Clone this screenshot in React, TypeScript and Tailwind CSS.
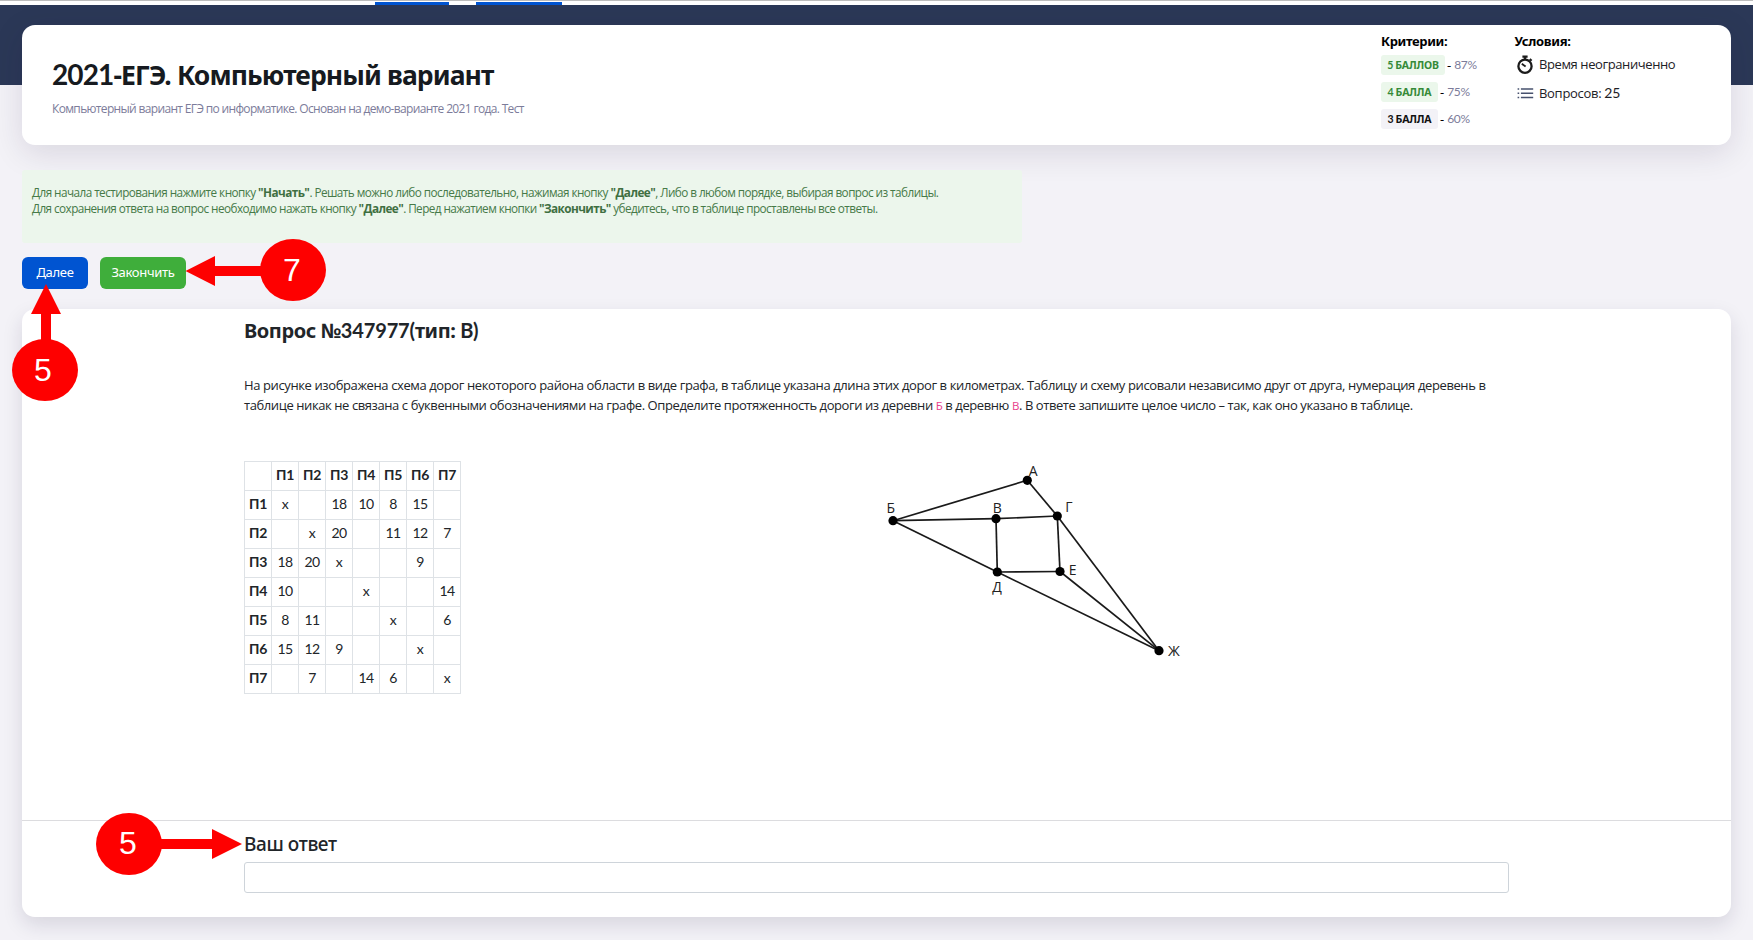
import type { ReactNode } from "react";

const sans = "font-['Open_Sans','Noto_Sans',sans-serif]";
const noto = "font-['Noto_Sans','Open_Sans',sans-serif]";
const lato = "font-['Lato','Open_Sans',sans-serif]";

function L({ children, className = "" }: { children: ReactNode; className?: string }) {
  return <span className={`${lato} leading-none ${className}`}>{children}</span>;
}

type Criterion = { mark: string; label: string; percent: string; box: string };

const criteria: Criterion[] = [
  { mark: "5", label: "БАЛЛОВ", percent: "87%", box: "w-16 bg-[#ebf7eb] text-[#358a38]" },
  { mark: "4", label: "БАЛЛА", percent: "75%", box: "w-[57px] bg-[#ebf7eb] text-[#358a38]" },
  { mark: "3", label: "БАЛЛА", percent: "60%", box: "w-[57px] bg-[#f3f2f7] text-[#111]" },
];

function Stopwatch() {
  return (
    <svg width="17" height="19" viewBox="0 0 17 19" fill="none" stroke="#1b1b1b">
      <circle cx="8" cy="11.2" r="6.6" strokeWidth="2.3" />
      <path d="M5.4 1.6h5.2M8 1.5v3" strokeWidth="2.4" />
      <path d="M12.8 4l1.8 1.8" strokeWidth="2" />
      <path d="M4.8 8.8L8.6 11.6" strokeWidth="1.9" />
    </svg>
  );
}

function ListIcon() {
  return (
    <svg width="17" height="12" viewBox="0 0 17 12" stroke="#47516e" strokeWidth="1.5">
      <path d="M.6 2h1.6M.6 6.3h1.6M.6 10.5h1.6M3.9 2h12.3M3.9 6.3h12.3M3.9 10.5h12.3" />
    </svg>
  );
}

const heads = ["П1", "П2", "П3", "П4", "П5", "П6", "П7"];
const rows = [
  ["x", "", "18", "10", "8", "15", ""],
  ["", "x", "20", "", "11", "12", "7"],
  ["18", "20", "x", "", "", "9", ""],
  ["10", "", "", "x", "", "", "14"],
  ["8", "11", "", "", "x", "", "6"],
  ["15", "12", "9", "", "", "x", ""],
  ["", "7", "", "14", "6", "", "x"],
];

function RoadTable() {
  const cell = "h-[29px] w-[27px] border border-[#dee2e6] p-0 pb-[2px] text-center";
  return (
    <table className={`${lato} h-[233px] w-[217px] table-fixed border-collapse text-[14px] leading-5 text-[#212529]`}>
      <tbody>
        <tr>
          <th className={cell} />
          {heads.map((h) => (
            <th key={h} className={`${cell} font-bold tracking-[-0.3px]`}>{h}</th>
          ))}
        </tr>
        {rows.map((r, i) => (
          <tr key={heads[i]}>
            <th className={`${cell} font-bold tracking-[-0.3px]`}>{heads[i]}</th>
            {r.map((v, j) => (
              <td key={j} className={`${cell} tracking-[-0.7px]`}>{v}</td>
            ))}
          </tr>
        ))}
      </tbody>
    </table>
  );
}

type Node = { x: number; y: number; lx: number; ly: number };
const nodes: Record<string, Node> = {
  А: { x: 151.3, y: 19.3, lx: 157.2, ly: 15 },
  Б: { x: 17, y: 59.7, lx: 14.8, ly: 52 },
  В: { x: 120, y: 57.7, lx: 121.2, ly: 51.5 },
  Г: { x: 181.3, y: 55, lx: 193, ly: 51 },
  Д: { x: 121.3, y: 111, lx: 121, ly: 130.5 },
  Е: { x: 184, y: 110.5, lx: 196.7, ly: 114 },
  Ж: { x: 283, y: 189.7, lx: 298, ly: 194.5 },
};
const edges = ["БА", "БВ", "БД", "ВГ", "ВД", "ДЕ", "ГЕ", "АГ", "ГЖ", "ЕЖ", "ДЖ"];

function Graph() {
  return (
    <svg className="-ml-px" width="320" height="215" viewBox="0 0 320 215">
      {edges.map((e) => (
        <line key={e} x1={nodes[e[0]].x} y1={nodes[e[0]].y} x2={nodes[e[1]].x} y2={nodes[e[1]].y} stroke="#1a1a1a" strokeWidth="1.7" />
      ))}
      {Object.entries(nodes).map(([name, n]) => (
        <g key={name}>
          <circle cx={n.x} cy={n.y} r="4.6" fill="#000" />
          <text x={n.lx} y={n.ly} textAnchor="middle" fill="#222" className={`${sans} text-[14px]`}>{name}</text>
        </g>
      ))}
    </svg>
  );
}

function Callouts() {
  const digit = "font-['Liberation_Sans',Arial,sans-serif] text-[32px]";
  return (
    <svg className="pointer-events-none absolute left-0 top-0" width="1753" height="940" viewBox="0 0 1753 940">
      <g fill="#fe0000">
        <path d="M185.5 271L215 256v10h50v10h-50v10z" />
        <ellipse cx="293" cy="270" rx="33" ry="31" />
        <path d="M46 284L61 314H51v30H41v-30H31z" />
        <ellipse cx="45" cy="370" rx="33" ry="31" />
        <path d="M242 844l-30 15v-10h-55v-10h55v-10z" />
        <ellipse cx="129" cy="844" rx="33" ry="31" />
      </g>
      <g fill="#fff" textAnchor="middle">
        <text x="292" y="281" className={digit}>7</text>
        <text x="43" y="381" className={digit}>5</text>
        <text x="128" y="854" className={digit}>5</text>
      </g>
    </svg>
  );
}

export default function App() {
  return (
    <div className={`${sans} relative h-[940px] w-[1753px] overflow-hidden bg-[#f3f2f7] text-[#212529]`}>
      <div className="flex h-[5px] items-end gap-[27px] border-t border-[#bdbdbd] bg-white pl-[375px]">
        <div className="h-[3px] w-[74px] bg-[#0054d1]" />
        <div className="h-[3px] w-[86px] bg-[#0054d1]" />
      </div>
      <div className="h-20 bg-[#2b3857]" />

      <main className="-mt-[60px] px-[22px]">
        <header className="flex h-[120px] rounded-[13px] bg-white pl-[30px] whitespace-nowrap shadow-[0_8px_32px_rgba(30,20,60,0.12)]">
          <div className="w-[1329px] pt-[34px]">
            <h1 className={`${noto} text-[26.5px] leading-8 font-bold tracking-[-0.9px] text-[#161a20]`}>
              <L className="text-[28px] font-bold">2021</L>-ЕГЭ. Компьютерный вариант
            </h1>
            <p className="mt-[10px] text-[12px] leading-4 tracking-[-0.66px] text-[#7c7c9a]">
              Компьютерный вариант ЕГЭ по информатике. Основан на демо-варианте 2021 года. Тест
            </p>
          </div>
          <section className="w-[133.5px] pt-2">
            <h2 className={`${noto} mb-[6px] text-[13px] leading-4 font-bold tracking-[-0.35px] text-black`}>Критерии:</h2>
            <div className="flex flex-col gap-[7px]">
              {criteria.map((c) => (
                <div key={c.mark} className="flex h-5 items-center">
                  <span className={`${noto} ${c.box} flex h-5 shrink-0 items-center justify-center gap-[2px] rounded-[3px] text-[10.5px] leading-5 font-bold tracking-[-0.15px]`}>
                    <L>{c.mark}</L>
                    <span>{c.label}</span>
                  </span>
                  <span className="ml-[2px] text-[13px] leading-5 text-black">-</span>
                  <span className={`${lato} ml-[3px] text-[12px] leading-5 tracking-[-0.3px] text-[#7c7c9a]`}>{c.percent}</span>
                </div>
              ))}
            </div>
          </section>
          <section className="pt-2 text-[13px] text-[#1d2126]">
            <h2 className={`${noto} mb-[5px] leading-4 font-bold tracking-[-0.3px] text-black`}>Условия:</h2>
            <div className="flex h-5 items-center gap-[5px] pl-[2.5px] leading-5 tracking-[-0.4px]">
              <Stopwatch />
              <span>Время неограниченно</span>
            </div>
            <div className="mt-[9px] flex h-5 items-center gap-[5px] pl-[2.5px] leading-5 tracking-[-0.3px]">
              <ListIcon />
              <span>Вопросов: <L className="text-[14px]">25</L></span>
            </div>
          </section>
        </header>

        <div className="mt-[25px] h-[73px] w-[1000px] rounded-[3px] bg-[#ecf6ec] pt-[14px] pl-[10px] text-[11.75px] leading-4 whitespace-nowrap text-[#467a48] [&_b]:font-bold [&_b]:text-[#3f6f42]">
          <p className="tracking-[-0.555px]">Для начала тестирования нажмите кнопку <b>"Начать"</b>. Решать можно либо последовательно, нажимая кнопку <b>"Далее"</b>, Либо в любом порядке, выбирая вопрос из таблицы.</p>
          <p className="tracking-[-0.575px]">Для сохранения ответа на вопрос необходимо нажать кнопку <b>"Далее"</b>. Перед нажатием кнопки <b>"Закончить"</b> убедитесь, что в таблице проставлены все ответы.</p>
        </div>

        <div className={`${noto} mt-[14px] flex gap-3 text-[13px] leading-[30px] tracking-[-0.3px] text-white`}>
          <button className="h-8 w-[66px] rounded-[6px] bg-[#0054d1] pb-[2px]">Далее</button>
          <button className="h-8 w-[86px] rounded-[6px] bg-[#3fae3b] pb-[2px]">Закончить</button>
        </div>

        <section className="mt-5 h-[608px] rounded-[13px] bg-white pt-[10px] shadow-[0_8px_20px_rgba(30,20,60,0.13)]">
          <div className="px-[222px]">
            <h2 className={`${noto} text-[20px] leading-6 font-bold tracking-[-0.4px]`}>
              Вопрос №<L className="font-bold tracking-[-0.15px]">347977(</L>тип: <L className="font-bold">B)</L>
            </h2>
            <div className="mt-8 text-[13px] leading-5 whitespace-nowrap">
              <p className="tracking-[-0.39px]">На рисунке изображена схема дорог некоторого района области в виде графа, в таблице указана длина этих дорог в километрах. Таблицу и схему рисовали независимо друг от друга, нумерация деревень в</p>
              <p className="tracking-[-0.415px]">таблице никак не связана с буквенными обозначениями на графе. Определите протяженность дороги из деревни <code className={`${sans} text-[11.5px] text-[#e83e8c]`}>Б</code> в деревню <code className={`${sans} text-[11.5px] text-[#e83e8c]`}>В</code>. В ответе запишите целое число – так, как оно указано в таблице.</p>
            </div>
            <div className="mt-[45px] grid h-[359px] grid-cols-2 items-start">
              <RoadTable />
              <Graph />
            </div>
          </div>
          <div className="border-t border-[#dcdcdf] px-[222px] pt-[11px]">
            <label className={`${noto} block text-[19px] leading-6 font-medium tracking-[-0.4px]`}>Ваш ответ</label>
            <input className="mt-[6px] block h-[31px] w-full rounded-[3px] border border-[#ced4da] bg-white px-2" />
          </div>
        </section>
      </main>

      <Callouts />
    </div>
  );
}
